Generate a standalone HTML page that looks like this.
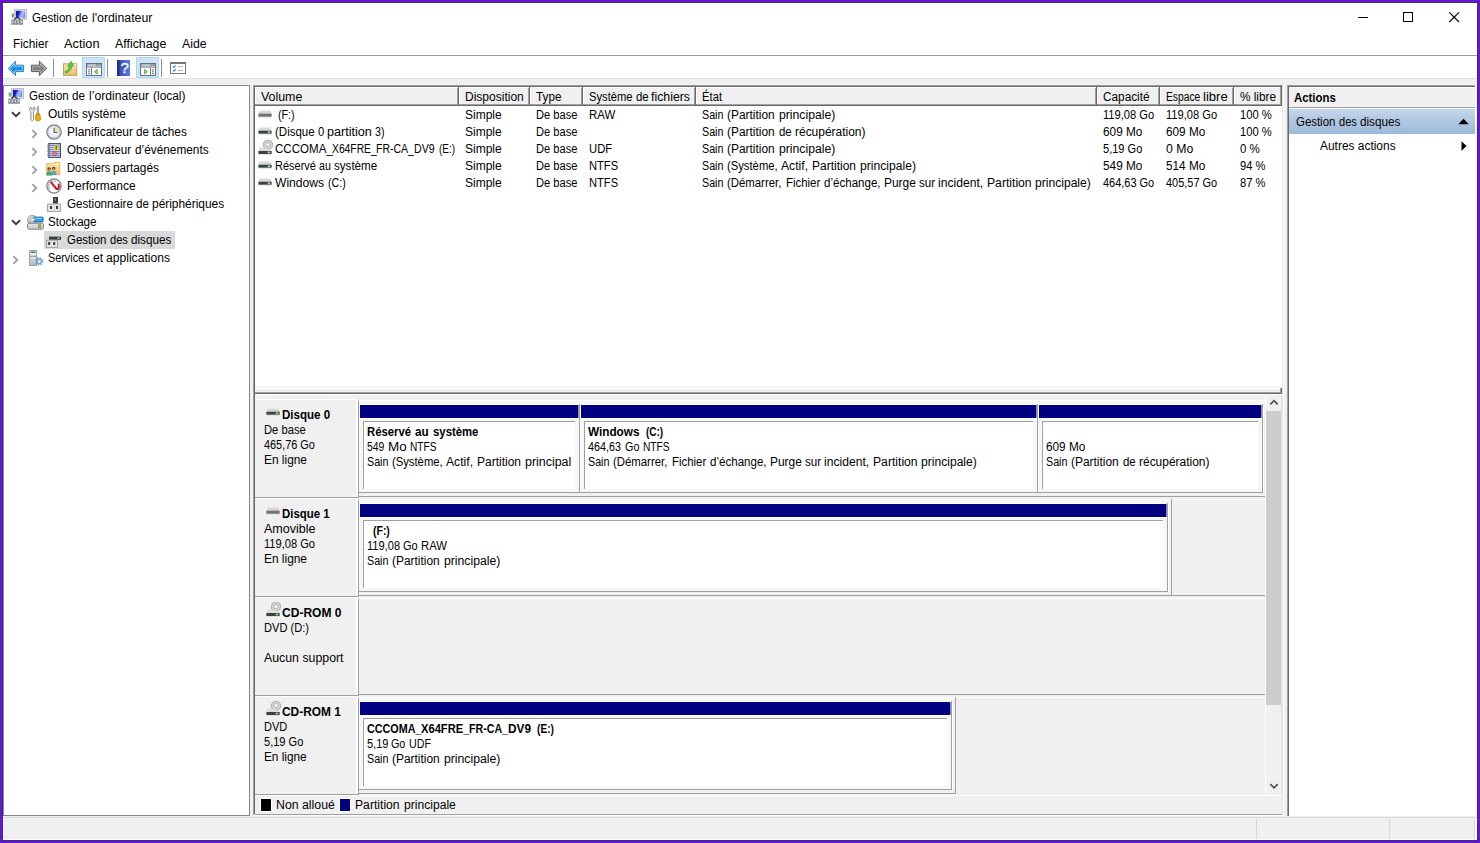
<!DOCTYPE html>
<html lang="fr"><head><meta charset="utf-8"><title>Gestion de l'ordinateur</title>
<style>
html,body{margin:0;padding:0}
body{width:1480px;height:843px;overflow:hidden;position:relative;background:#700ee0;font-family:"Liberation Sans",sans-serif;font-size:12px;color:#000}
.a,.t,svg{position:absolute}
.t{white-space:pre;line-height:14px;height:14px;transform-origin:0 0;font-size:12px}
.w{background:#fff}.g{background:#f0f0f0}.d1{background:#a0a0a0}.d2{background:#696969}.nv{background:#000080}
</style></head><body>
<!-- window frame -->
<div class="a" style="left:1px;top:1px;width:1478px;height:841px;background:#5d1dc0"></div>
<div class="a" style="left:2px;top:2px;width:1476px;height:839px;background:#382c7e"></div>
<div class="a w" style="left:3px;top:3px;width:1474px;height:837px"></div>
<!-- menu line / toolbar -->
<div class="a" style="left:3px;top:55px;width:1474px;height:1px;background:#a0a0a0"></div>
<div class="a" style="left:3px;top:78px;width:1474px;height:1px;background:#e4e4e4"></div>
<div class="a g" style="left:3px;top:79px;width:1474px;height:738px"></div>
<!-- status bar -->
<div class="a" style="left:3px;top:817px;width:1474px;height:1px;background:#d9d9d9"></div>
<div class="a g" style="left:3px;top:818px;width:1474px;height:21px"></div>
<div class="a w" style="left:3px;top:839px;width:1474px;height:1px"></div>
<div class="a" style="left:1256px;top:819px;width:1px;height:20px;background:#d7d7d7"></div>
<div class="a" style="left:1389px;top:819px;width:1px;height:20px;background:#d7d7d7"></div>
<div class="a" style="left:1474px;top:819px;width:1px;height:20px;background:#d7d7d7"></div>
<div class="a w" style="left:1475px;top:818px;width:2px;height:22px"></div>

<!-- toolbar buttons -->
<div class="a" style="left:82px;top:57px;width:23px;height:21px;background:#cce4f7;box-shadow:inset 0 0 0 1px #b5d6f2"></div>
<div class="a" style="left:136px;top:57px;width:23px;height:21px;background:#cce4f7;box-shadow:inset 0 0 0 1px #b5d6f2"></div>
<div class="a" style="left:53px;top:59px;width:1px;height:18px;background:#8d8d8d"></div>
<div class="a" style="left:107px;top:59px;width:1px;height:18px;background:#8d8d8d"></div>
<div class="a" style="left:161px;top:59px;width:1px;height:18px;background:#8d8d8d"></div>

<!-- left pane -->
<div class="a w" style="left:3px;top:85px;width:247px;height:731px;box-shadow:inset 0 0 0 1px #828790"></div>
<div class="a" style="left:44px;top:231px;width:131px;height:18px;background:#d9d9d9"></div>

<!-- middle pane: upper list -->
<div class="a d1" style="left:253px;top:85px;width:29px;height:730px;width:1px"></div>
<div class="a d2" style="left:254px;top:86px;width:1px;height:728px"></div>
<div class="a d1" style="left:253px;top:85px;width:1029px;height:1px"></div>
<div class="a d2" style="left:254px;top:86px;width:1028px;height:1px"></div>
<div class="a w" style="left:255px;top:87px;width:1027px;height:299px"></div>
<div class="a d1" style="left:1280px;top:87px;width:1px;height:19px"></div>
<div class="a d2" style="left:1281px;top:85px;width:1px;height:21px"></div>
<div class="a" style="left:1282px;top:85px;width:1px;height:731px;background:#e3e3e3"></div>
<div class="a w" style="left:1283px;top:85px;width:1px;height:731px"></div>
<!-- header -->
<div class="a g" style="left:256px;top:88px;width:1024px;height:16px"></div>
<div class="a d1" style="left:255px;top:104px;width:1025px;height:1px"></div>
<div class="a d2" style="left:255px;top:105px;width:1026px;height:1px"></div>
<div class="a w" style="left:255px;top:87px;width:1025px;height:1px"></div>
<div class="a w" style="left:255px;top:87px;width:1px;height:17px"></div>
<div class="a d1" style="left:457px;top:88px;width:1px;height:17px"></div>
<div class="a d2" style="left:458px;top:87px;width:1px;height:18px"></div>
<div class="a w" style="left:459px;top:87px;width:1px;height:17px"></div>
<div class="a d1" style="left:528px;top:88px;width:1px;height:17px"></div>
<div class="a d2" style="left:529px;top:87px;width:1px;height:18px"></div>
<div class="a w" style="left:530px;top:87px;width:1px;height:17px"></div>
<div class="a d1" style="left:581px;top:88px;width:1px;height:17px"></div>
<div class="a d2" style="left:582px;top:87px;width:1px;height:18px"></div>
<div class="a w" style="left:583px;top:87px;width:1px;height:17px"></div>
<div class="a d1" style="left:694px;top:88px;width:1px;height:17px"></div>
<div class="a d2" style="left:695px;top:87px;width:1px;height:18px"></div>
<div class="a w" style="left:696px;top:87px;width:1px;height:17px"></div>
<div class="a d1" style="left:1095px;top:88px;width:1px;height:17px"></div>
<div class="a d2" style="left:1096px;top:87px;width:1px;height:18px"></div>
<div class="a w" style="left:1097px;top:87px;width:1px;height:17px"></div>
<div class="a d1" style="left:1158px;top:88px;width:1px;height:17px"></div>
<div class="a d2" style="left:1159px;top:87px;width:1px;height:18px"></div>
<div class="a w" style="left:1160px;top:87px;width:1px;height:17px"></div>
<div class="a d1" style="left:1232px;top:88px;width:1px;height:17px"></div>
<div class="a d2" style="left:1233px;top:87px;width:1px;height:18px"></div>
<div class="a w" style="left:1234px;top:87px;width:1px;height:17px"></div>
<!-- splitter -->
<div class="a g" style="left:255px;top:386px;width:1027px;height:6px"></div>
<div class="a w" style="left:255px;top:388px;width:1025px;height:1px"></div>
<div class="a d1" style="left:255px;top:392px;width:1026px;height:1px"></div>
<div class="a d2" style="left:255px;top:393px;width:1027px;height:1px"></div>
<div class="a d1" style="left:1280px;top:388px;width:1px;height:5px"></div>
<div class="a d2" style="left:1281px;top:388px;width:1px;height:6px"></div>
<div class="a w" style="left:255px;top:394px;width:1027px;height:1px"></div>
<!-- lower graphical view -->
<div class="a w" style="left:256px;top:399px;width:100px;height:1px"></div>
<div class="a w" style="left:359px;top:400px;width:906px;height:1px"></div>
<div class="a w" style="left:356px;top:400px;width:2px;height:97px"></div>
<div class="a d1" style="left:358px;top:401px;width:1px;height:97px"></div>
<div class="a d1" style="left:255px;top:497px;width:103px;height:1px"></div>
<div class="a d1" style="left:359px;top:496px;width:906px;height:1px"></div>
<div class="a" style="left:359px;top:401px;width:905px;height:91px;background:#f6f6f6"></div>
<div class="a d1" style="left:359px;top:492px;width:904px;height:1px"></div>
<div class="a w" style="left:360px;top:404px;width:219px;height:1px"></div>
<div class="a nv" style="left:360px;top:405px;width:218px;height:13px"></div>
<div class="a w" style="left:360px;top:418px;width:219px;height:1px"></div>
<div class="a d1" style="left:579px;top:404px;width:1px;height:89px"></div>
<div class="a" style="left:578px;top:405px;width:1px;height:13px;background:#8c8cc4"></div>
<div class="a w" style="left:580px;top:404px;width:1px;height:88px"></div>
<div class="a w" style="left:363px;top:421px;width:212px;height:68px;box-shadow:inset 1px 1px 0 #a0a0a0"></div>
<div class="a w" style="left:581px;top:404px;width:456px;height:1px"></div>
<div class="a nv" style="left:581px;top:405px;width:455px;height:13px"></div>
<div class="a w" style="left:581px;top:418px;width:456px;height:1px"></div>
<div class="a d1" style="left:1037px;top:404px;width:1px;height:89px"></div>
<div class="a" style="left:1036px;top:405px;width:1px;height:13px;background:#8c8cc4"></div>
<div class="a w" style="left:1038px;top:404px;width:1px;height:88px"></div>
<div class="a w" style="left:584px;top:421px;width:449px;height:68px;box-shadow:inset 1px 1px 0 #a0a0a0"></div>
<div class="a w" style="left:1039px;top:404px;width:223px;height:1px"></div>
<div class="a nv" style="left:1039px;top:405px;width:222px;height:13px"></div>
<div class="a w" style="left:1039px;top:418px;width:223px;height:1px"></div>
<div class="a d1" style="left:1262px;top:404px;width:1px;height:89px"></div>
<div class="a" style="left:1261px;top:405px;width:1px;height:13px;background:#8c8cc4"></div>
<div class="a w" style="left:1263px;top:404px;width:1px;height:88px"></div>
<div class="a w" style="left:1042px;top:421px;width:216px;height:68px;box-shadow:inset 1px 1px 0 #a0a0a0"></div>
<div class="a w" style="left:256px;top:498px;width:100px;height:1px"></div>
<div class="a w" style="left:359px;top:499px;width:906px;height:1px"></div>
<div class="a w" style="left:356px;top:499px;width:2px;height:97px"></div>
<div class="a d1" style="left:358px;top:500px;width:1px;height:97px"></div>
<div class="a d1" style="left:255px;top:596px;width:103px;height:1px"></div>
<div class="a d1" style="left:359px;top:595px;width:906px;height:1px"></div>
<div class="a" style="left:359px;top:500px;width:810px;height:91px;background:#f6f6f6"></div>
<div class="a d1" style="left:359px;top:591px;width:809px;height:1px"></div>
<div class="a d1" style="left:1171px;top:499px;width:1px;height:97px"></div>
<div class="a w" style="left:360px;top:503px;width:807px;height:1px"></div>
<div class="a nv" style="left:360px;top:504px;width:806px;height:13px"></div>
<div class="a w" style="left:360px;top:517px;width:807px;height:1px"></div>
<div class="a d1" style="left:1167px;top:503px;width:1px;height:89px"></div>
<div class="a" style="left:1166px;top:504px;width:1px;height:13px;background:#8c8cc4"></div>
<div class="a w" style="left:1168px;top:503px;width:1px;height:88px"></div>
<div class="a w" style="left:363px;top:520px;width:800px;height:68px;box-shadow:inset 1px 1px 0 #a0a0a0"></div>
<div class="a w" style="left:256px;top:597px;width:100px;height:1px"></div>
<div class="a w" style="left:359px;top:598px;width:906px;height:1px"></div>
<div class="a w" style="left:356px;top:598px;width:2px;height:97px"></div>
<div class="a d1" style="left:358px;top:599px;width:1px;height:97px"></div>
<div class="a d1" style="left:255px;top:695px;width:103px;height:1px"></div>
<div class="a d1" style="left:359px;top:694px;width:906px;height:1px"></div>
<div class="a w" style="left:256px;top:696px;width:100px;height:1px"></div>
<div class="a w" style="left:359px;top:697px;width:906px;height:1px"></div>
<div class="a w" style="left:356px;top:697px;width:2px;height:97px"></div>
<div class="a d1" style="left:358px;top:698px;width:1px;height:97px"></div>
<div class="a d1" style="left:255px;top:794px;width:103px;height:1px"></div>
<div class="a d1" style="left:359px;top:793px;width:597px;height:1px"></div>
<div class="a" style="left:359px;top:698px;width:594px;height:91px;background:#f6f6f6"></div>
<div class="a d1" style="left:359px;top:789px;width:593px;height:1px"></div>
<div class="a d1" style="left:955px;top:697px;width:1px;height:97px"></div>
<div class="a w" style="left:360px;top:701px;width:591px;height:1px"></div>
<div class="a nv" style="left:360px;top:702px;width:590px;height:13px"></div>
<div class="a w" style="left:360px;top:715px;width:591px;height:1px"></div>
<div class="a d1" style="left:951px;top:701px;width:1px;height:89px"></div>
<div class="a" style="left:950px;top:702px;width:1px;height:13px;background:#8c8cc4"></div>
<div class="a w" style="left:952px;top:701px;width:1px;height:88px"></div>
<div class="a w" style="left:363px;top:718px;width:584px;height:68px;box-shadow:inset 1px 1px 0 #a0a0a0"></div>
<!-- scrollbar -->
<div class="a w" style="left:1265px;top:395px;width:1px;height:399px"></div>
<div class="a g" style="left:1266px;top:395px;width:16px;height:399px"></div>
<div class="a" style="left:1281px;top:395px;width:1px;height:420px;background:#e3e3e3"></div>
<div class="a" style="left:1266px;top:411px;width:15px;height:294px;background:#cdcdcd"></div>
<svg style="left:1269px;top:398px" width="10" height="8" viewBox="0 0 10 8"><path d="M1.3 6.4 L5 2.7 L8.7 6.4" fill="none" stroke="#505050" stroke-width="1.7"/></svg>
<svg style="left:1269px;top:782px" width="10" height="8" viewBox="0 0 10 8"><path d="M1.3 2.2 L5 5.9 L8.7 2.2" fill="none" stroke="#505050" stroke-width="1.7"/></svg>
<!-- legend -->
<div class="a g" style="left:255px;top:795px;width:1027px;height:19px"></div>
<div class="a w" style="left:255px;top:795px;width:1027px;height:1px"></div>
<div class="a d1" style="left:255px;top:814px;width:1027px;height:1px"></div>
<div class="a w" style="left:253px;top:815px;width:1031px;height:1px"></div>
<div class="a" style="left:261px;top:799px;width:10px;height:12px;background:#000;box-shadow:0 0 0 1px #fff"></div>
<div class="a nv" style="left:340px;top:799px;width:10px;height:12px;box-shadow:0 0 0 1px #fff"></div>

<!-- actions pane -->
<div class="a w" style="left:1287px;top:85px;width:1189px;height:731px;width:189px"></div>
<div class="a d1" style="left:1287px;top:85px;width:1px;height:731px"></div>
<div class="a d2" style="left:1288px;top:86px;width:1px;height:730px"></div>
<div class="a d1" style="left:1287px;top:85px;width:188px;height:1px"></div>
<div class="a d2" style="left:1288px;top:86px;width:187px;height:1px"></div>
<div class="a g" style="left:1289px;top:88px;width:186px;height:19px"></div>
<div class="a d1" style="left:1289px;top:107px;width:186px;height:1px"></div>
<div class="a" style="left:1289px;top:109px;width:186px;height:25px;background:linear-gradient(#c4d6ea,#9cb8d9)"></div>
<svg style="left:1458px;top:118px" width="11" height="7" viewBox="0 0 11 7"><path d="M0.3 6.3 L5.5 0.8 L10.7 6.3 Z" fill="#000"/></svg>
<svg style="left:1461px;top:141px" width="6" height="10" viewBox="0 0 6 10"><path d="M0.5 0.3 L5.6 5 L0.5 9.7 Z" fill="#000"/></svg>

<!-- window controls -->
<svg style="left:1350px;top:8px" width="120" height="20" viewBox="0 0 120 20" shape-rendering="crispEdges">
<rect x="8" y="9" width="10" height="1" fill="#000"/>
<rect x="53.5" y="4.5" width="9" height="9" fill="none" stroke="#000" stroke-width="1"/>
<path d="M99.3 4.3 L109 14 M109 4.3 L99.3 14" stroke="#000" stroke-width="1.1" fill="none" shape-rendering="geometricPrecision"/>
</svg>
<svg width="0" height="0" style="left:0;top:0"><defs>
<linearGradient id="gB" x1="0" y1="0" x2="0" y2="1"><stop offset="0" stop-color="#4cb2f0"/><stop offset="0.6" stop-color="#1488dc"/><stop offset="1" stop-color="#0a74c8"/></linearGradient>
<linearGradient id="gG" x1="0" y1="0" x2="0" y2="1"><stop offset="0" stop-color="#8e8e8e"/><stop offset="1" stop-color="#787878"/></linearGradient>
<linearGradient id="gF" x1="0" y1="0" x2="0" y2="1"><stop offset="0" stop-color="#fae7a8"/><stop offset="1" stop-color="#f2be62"/></linearGradient>
<linearGradient id="gS" x1="0" y1="0.2" x2="1" y2="0.5"><stop offset="0" stop-color="#1212b4"/><stop offset="0.36" stop-color="#1a22c0"/><stop offset="0.5" stop-color="#8090f0"/><stop offset="0.8" stop-color="#b4bef8"/><stop offset="1" stop-color="#6c7ce4"/></linearGradient>
<linearGradient id="gH" x1="0" y1="0" x2="1" y2="0"><stop offset="0" stop-color="#22358f"/><stop offset="0.2" stop-color="#3a52b8"/><stop offset="1" stop-color="#5b7bd9"/></linearGradient>
<linearGradient id="gD" x1="0" y1="0" x2="0" y2="1"><stop offset="0" stop-color="#e6e6e6"/><stop offset="1" stop-color="#c9c9c9"/></linearGradient>
<radialGradient id="gC" cx="0.5" cy="0.5" r="0.5"><stop offset="0" stop-color="#ffffff"/><stop offset="0.7" stop-color="#e8eefb"/><stop offset="1" stop-color="#cfd8ea"/></radialGradient>
<linearGradient id="gCD" x1="0" y1="0" x2="1" y2="1"><stop offset="0" stop-color="#f0f0f0"/><stop offset="0.5" stop-color="#b8b8b8"/><stop offset="1" stop-color="#e0e0e0"/></linearGradient>
<linearGradient id="gT" x1="0" y1="0" x2="0" y2="1"><stop offset="0" stop-color="#eef2f4"/><stop offset="1" stop-color="#aebac0"/></linearGradient>
</defs></svg>
<svg style="left:11px;top:9px" width="16" height="16" viewBox="0 0 16 16" ><rect x="3.4" y="0.4" width="12.2" height="10" fill="#d6daf2" stroke="#b6beba" stroke-width="0.9"/>
<rect x="4.9" y="1.9" width="9.1" height="6.9" fill="url(#gS)"/>
<rect x="0.6" y="4.4" width="2.4" height="4.4" fill="#a4bf94"/><rect x="1.4" y="5.2" width="0.9" height="2.2" fill="#4c6444"/>
<path d="M3.2 10.9q3-4.4 6.2 0" fill="none" stroke="#2c3038" stroke-width="1.5"/><rect x="5.3" y="9.6" width="2" height="1.2" fill="#fff"/>
<rect x="0.2" y="10.7" width="11.8" height="5.1" fill="#8c9498"/><rect x="0.2" y="10.7" width="11.8" height="0.9" fill="#a8b0b2"/>
<rect x="0.8" y="12.3" width="10.6" height="1.5" fill="#e6eaec"/>
<rect x="2.4" y="12.1" width="1.1" height="1.9" fill="#5c6468"/><rect x="5.3" y="12.1" width="1.1" height="1.9" fill="#5c6468"/><rect x="8.2" y="12.1" width="1.1" height="1.9" fill="#5c6468"/></svg>
<svg style="left:8px;top:88px" width="16" height="16" viewBox="0 0 16 16" ><rect x="3.4" y="0.4" width="12.2" height="10" fill="#d6daf2" stroke="#b6beba" stroke-width="0.9"/>
<rect x="4.9" y="1.9" width="9.1" height="6.9" fill="url(#gS)"/>
<rect x="0.6" y="4.4" width="2.4" height="4.4" fill="#a4bf94"/><rect x="1.4" y="5.2" width="0.9" height="2.2" fill="#4c6444"/>
<path d="M3.2 10.9q3-4.4 6.2 0" fill="none" stroke="#2c3038" stroke-width="1.5"/><rect x="5.3" y="9.6" width="2" height="1.2" fill="#fff"/>
<rect x="0.2" y="10.7" width="11.8" height="5.1" fill="#8c9498"/><rect x="0.2" y="10.7" width="11.8" height="0.9" fill="#a8b0b2"/>
<rect x="0.8" y="12.3" width="10.6" height="1.5" fill="#e6eaec"/>
<rect x="2.4" y="12.1" width="1.1" height="1.9" fill="#5c6468"/><rect x="5.3" y="12.1" width="1.1" height="1.9" fill="#5c6468"/><rect x="8.2" y="12.1" width="1.1" height="1.9" fill="#5c6468"/></svg>
<svg style="left:7px;top:60px" width="18" height="17" viewBox="0 0 18 17" ><path d="M1.2 8.4 L8.6 1.2 L8.6 5.2 L16.6 5.2 L16.6 11.6 L8.6 11.6 L8.6 15.6 Z" fill="#8ed2f8" stroke="#2f7fc4" stroke-width="1" stroke-linejoin="round"/><path d="M3.1 8.4 L7.4 4.2 L7.4 6.5 L15.3 6.5 L15.3 10.3 L7.4 10.3 L7.4 12.6 Z" fill="url(#gB)"/></svg>
<svg style="left:30px;top:60px" width="18" height="17" viewBox="0 0 18 17" ><path d="M16.8 8.4 L9.4 1.2 L9.4 5.2 L1.4 5.2 L1.4 11.6 L9.4 11.6 L9.4 15.6 Z" fill="#b4b4b4" stroke="#5a5a5a" stroke-width="1" stroke-linejoin="round"/><path d="M14.9 8.4 L10.6 4.2 L10.6 6.5 L2.7 6.5 L2.7 10.3 L10.6 10.3 L10.6 12.6 Z" fill="url(#gG)"/></svg>
<svg style="left:62px;top:59px" width="16" height="18" viewBox="0 0 16 18" ><rect x="1.5" y="4.8" width="13.2" height="11.5" fill="url(#gF)" stroke="#bca06a" stroke-width="1"/>
<path d="M10.4 5.4h3.8v1.9h-4.6z" fill="#fdf4cf"/><path d="M2 7.4h12.2" stroke="#e9cf8c" stroke-width="0.8"/>
<path d="M3.1 12.6C5.8 11.9 7.3 9.6 7.6 6.6L5.7 7.2 9 2.3 11.7 7 9.9 6.6C9.7 10.4 7.4 13.2 3.8 13.9z" fill="#52d252" stroke="#2f9c32" stroke-width="0.7" stroke-linejoin="round"/></svg>
<svg style="left:86px;top:63px" width="16" height="13" viewBox="0 0 16 13" ><rect x="0.5" y="0.5" width="15" height="12" fill="#fff" stroke="#6b7380"/>
<rect x="1" y="1" width="14" height="4" fill="#6f7783"/><rect x="1.5" y="1.5" width="9" height="1.1" fill="#ffffff"/><rect x="11.6" y="1.5" width="1.1" height="1.1" fill="#ffffff"/><rect x="13.5" y="1.5" width="1.1" height="1.1" fill="#ffffff"/><rect x="1" y="3.5" width="14" height="1" fill="#eef0f4"/>
<rect x="5" y="5" width="1" height="7.5" fill="#6b7380"/>
<rect x="2" y="6.4" width="2" height="1" fill="#6b7380"/><rect x="2" y="8.3" width="2" height="1" fill="#6b7380"/><rect x="2" y="10.2" width="2" height="1" fill="#6b7380"/>
<path d="M11.2 6.6v4.2l-2.8-2.1z" fill="#a8e29a" stroke="#46a83a" stroke-width="0.9"/></svg>
<svg style="left:117px;top:60px" width="13" height="16" viewBox="0 0 13 16" ><rect x="0" y="0" width="13" height="16" fill="url(#gH)"/><rect x="0" y="0" width="2.4" height="16" fill="#1f2f86"/>
<text x="7.7" y="13.4" font-family="Liberation Sans, sans-serif" font-weight="400" font-size="15" fill="#fff" stroke="#fff" stroke-width="0.3" text-anchor="middle">?</text></svg>
<svg style="left:140px;top:63px" width="16" height="13" viewBox="0 0 16 13" ><rect x="0.5" y="0.5" width="15" height="12" fill="#fff" stroke="#6b7380"/>
<rect x="1" y="1" width="14" height="4" fill="#6f7783"/><rect x="1.5" y="1.5" width="9" height="1.1" fill="#ffffff"/><rect x="11.6" y="1.5" width="1.1" height="1.1" fill="#ffffff"/><rect x="13.5" y="1.5" width="1.1" height="1.1" fill="#ffffff"/><rect x="1" y="3.5" width="14" height="1" fill="#eef0f4"/>
<rect x="10" y="5" width="1" height="7.5" fill="#6b7380"/>
<rect x="12" y="6.4" width="2" height="1" fill="#6b7380"/><rect x="12" y="8.3" width="2" height="1" fill="#6b7380"/><rect x="12" y="10.2" width="2" height="1" fill="#6b7380"/>
<path d="M4.6 6.6v4.2l2.8-2.1z" fill="#a8e29a" stroke="#46a83a" stroke-width="0.9"/></svg>
<svg style="left:170px;top:62px" width="16" height="12" viewBox="0 0 16 12" ><rect x="0.5" y="0.5" width="15" height="11" fill="#fff" stroke="#787878"/><rect x="0" y="0" width="16" height="2" fill="#787878"/>
<path d="M3 4.2l1.1 1.4 1.7-2.4" fill="none" stroke="#3f86d8" stroke-width="1.1"/><path d="M3 8l1.1 1.4 1.7-2.4" fill="none" stroke="#3f86d8" stroke-width="1.1"/>
<rect x="8" y="4.2" width="5" height="1" fill="#b4b4b4"/><rect x="8" y="8" width="5" height="1" fill="#b4b4b4"/></svg>
<svg style="left:11px;top:111px" width="10" height="7" viewBox="0 0 10 7" ><path d="M1 1.3 L5 5.2 L9 1.3" fill="none" stroke="#3c3c3c" stroke-width="1.9"/></svg>
<svg style="left:11px;top:219px" width="10" height="7" viewBox="0 0 10 7" ><path d="M1 1.3 L5 5.2 L9 1.3" fill="none" stroke="#3c3c3c" stroke-width="1.9"/></svg>
<svg style="left:31px;top:128.5px" width="7" height="10" viewBox="0 0 7 10" ><path d="M1.4 1.2 L5.2 5 L1.4 8.8" fill="none" stroke="#a2a2a2" stroke-width="1.9"/></svg>
<svg style="left:31px;top:146.5px" width="7" height="10" viewBox="0 0 7 10" ><path d="M1.4 1.2 L5.2 5 L1.4 8.8" fill="none" stroke="#a2a2a2" stroke-width="1.9"/></svg>
<svg style="left:31px;top:164.5px" width="7" height="10" viewBox="0 0 7 10" ><path d="M1.4 1.2 L5.2 5 L1.4 8.8" fill="none" stroke="#a2a2a2" stroke-width="1.9"/></svg>
<svg style="left:31px;top:182.5px" width="7" height="10" viewBox="0 0 7 10" ><path d="M1.4 1.2 L5.2 5 L1.4 8.8" fill="none" stroke="#a2a2a2" stroke-width="1.9"/></svg>
<svg style="left:12px;top:254.5px" width="7" height="10" viewBox="0 0 7 10" ><path d="M1.4 1.2 L5.2 5 L1.4 8.8" fill="none" stroke="#a2a2a2" stroke-width="1.9"/></svg>
<svg style="left:29px;top:106px" width="12" height="16" viewBox="0 0 12 16" ><path d="M2 0.9 C0 1.8 -0.2 4.6 1.9 5.6 L1.9 13.6 Q3.2 15.8 4.5 13.6 L4.5 5.6 C6.6 4.6 6.6 2 5 0.8 L4.4 3.2 L2.6 3.4 Z" fill="#f4f4f4" stroke="#8c8c8c" stroke-width="1"/>
<rect x="8.4" y="0.2" width="1.1" height="7.4" fill="#5a5a5a"/>
<path d="M7.4 7.2h3v1.6l1 1.2v4q-2.5 2.2-5 0v-4l1-1.2z" fill="#ecae00" stroke="#c48a00" stroke-width="0.7"/><rect x="7.2" y="8.6" width="3.4" height="0.8" fill="#a87400"/></svg>
<svg style="left:46px;top:124px" width="16" height="16" viewBox="0 0 16 16" ><circle cx="8" cy="8" r="7.1" fill="url(#gC)" stroke="#8a8a8a" stroke-width="1.5"/><circle cx="8" cy="8" r="5.9" fill="none" stroke="#c4ccdc" stroke-width="0.9"/>
<path d="M8 8V2.6A5.4 5.4 0 0 1 13.4 8z" fill="#ece0a4"/>
<path d="M8 4V8.5H11.4" fill="none" stroke="#565e66" stroke-width="1.1"/></svg>
<svg style="left:47px;top:143px" width="14" height="15" viewBox="0 0 14 15" ><rect x="1.9" y="0.5" width="11.6" height="14" fill="#c8d8fa" stroke="#4c5474" stroke-width="1.3"/><rect x="3" y="2.2" width="9.6" height="0.8" fill="#6676ac"/><rect x="3" y="4.2" width="9.6" height="0.8" fill="#6676ac"/><rect x="3" y="6.2" width="9.6" height="0.8" fill="#6676ac"/><rect x="3" y="8.2" width="9.6" height="0.8" fill="#6676ac"/><rect x="3" y="10.2" width="9.6" height="0.8" fill="#6676ac"/><rect x="3" y="12.2" width="9.6" height="0.8" fill="#6676ac"/><rect x="0.2" y="1.5" width="2.6" height="1.2" rx="0.5" fill="#7c808a"/><rect x="0.2" y="3.6" width="2.6" height="1.2" rx="0.5" fill="#7c808a"/><rect x="0.2" y="5.7" width="2.6" height="1.2" rx="0.5" fill="#7c808a"/><rect x="0.2" y="7.8" width="2.6" height="1.2" rx="0.5" fill="#7c808a"/><rect x="0.2" y="9.9" width="2.6" height="1.2" rx="0.5" fill="#7c808a"/><rect x="0.2" y="12.0" width="2.6" height="1.2" rx="0.5" fill="#7c808a"/>
<circle cx="9.2" cy="4.8" r="2.6" fill="#ecd22c"/><rect x="8.75" y="3" width="1" height="2.5" fill="#3a3200"/><rect x="8.75" y="5.9" width="1" height="0.9" fill="#3a3200"/>
<circle cx="7.5" cy="10.6" r="2.4" fill="#d63e4a"/><path d="M6.5 9.6l2 2M8.5 9.6l-2 2" stroke="#fff" stroke-width="0.9"/></svg>
<svg style="left:46px;top:161px" width="15" height="15" viewBox="0 0 15 15" ><path d="M0.6 2.6h6.2l1.2-1.3h5q0.8 0 0.8 0.8v11.7h-13.2z" fill="url(#gF)" stroke="#d6b46c" stroke-width="0.9"/>
<path d="M7.2 3.4h6.2" stroke="#fff6d0" stroke-width="0.8"/>
<path d="M0.4 14.6q0.2-4.4 2.8-4.4t2.8 4.4z" fill="#3aa870"/><circle cx="3.2" cy="7.9" r="1.7" fill="#54422f"/><circle cx="3.3" cy="8.5" r="0.9" fill="#c89a78"/>
<path d="M5 14q0.2-4.2 2.7-4.2t2.7 4.2z" fill="#5a9ad0"/><circle cx="7.7" cy="7.4" r="1.7" fill="#54422f"/><circle cx="7.8" cy="8" r="0.9" fill="#c89a78"/></svg>
<svg style="left:46px;top:178px" width="16" height="16" viewBox="0 0 16 16" ><circle cx="8" cy="8" r="7.1" fill="#fdfdfd" stroke="#8c8c8c" stroke-width="1.5"/>
<path d="M4 11A4.8 4.8 0 0 1 9.6 3.4" fill="none" stroke="#3c5c48" stroke-width="1" stroke-dasharray="1 1"/>
<path d="M12.3 5.6A4.8 4.8 0 0 1 12 11L9.8 11" fill="none" stroke="#b8182c" stroke-width="1.8"/>
<path d="M4.6 3.8L10.6 11" stroke="#cc1c30" stroke-width="2.1"/></svg>
<svg style="left:47px;top:197px" width="14" height="15" viewBox="0 0 14 15" ><rect x="6" y="0" width="5" height="6.6" fill="#3a3a3a"/><rect x="7.6" y="1.6" width="1.4" height="2" fill="#9c9c9c"/>
<rect x="0.6" y="7" width="12.8" height="7.4" fill="#e4e4e4" stroke="#9a9a9a" stroke-width="0.9"/>
<rect x="3" y="9" width="2" height="3" fill="#3a3a3a"/><rect x="9" y="9" width="2" height="3" fill="#3a3a3a"/></svg>
<svg style="left:27px;top:215px" width="17" height="15" viewBox="0 0 17 15" ><circle cx="5.2" cy="5" r="4.7" fill="url(#gCD)" stroke="#8e8e8e" stroke-width="0.8"/><circle cx="5.2" cy="5" r="1.5" fill="#fafafa" stroke="#9c9c9c" stroke-width="0.5"/>
<rect x="7" y="2" width="9.2" height="5" rx="1" fill="#2b9ad8" stroke="#1b6aa8" stroke-width="0.8"/><rect x="8.2" y="2.8" width="7" height="1.5" rx="0.6" fill="#7ecbf2"/><rect x="6.4" y="3.6" width="1.6" height="1.6" fill="#e8f4fc"/>
<rect x="0.6" y="8.2" width="15.8" height="6" rx="1.6" fill="url(#gD)" stroke="#7e7e7e" stroke-width="1"/><rect x="11.4" y="9.7" width="2.3" height="3.1" fill="#8ccc3c" stroke="#5a8a2a" stroke-width="0.5"/></svg>
<svg style="left:46px;top:236px" width="15" height="12" viewBox="0 0 15 12" ><rect x="3" y="0.6" width="12" height="3.2" fill="#3a403c"/><rect x="11.6" y="1.4" width="2" height="1.5" fill="#7fe070"/>
<rect x="0.5" y="4.2" width="11" height="7.2" fill="#e6e6e6" stroke="#9a9a9a" stroke-width="0.9"/>
<rect x="2.2" y="6" width="2" height="3" fill="#3a3a3a"/><rect x="7.2" y="6" width="2" height="3" fill="#3a3a3a"/></svg>
<svg style="left:29px;top:250px" width="15" height="16" viewBox="0 0 15 16" ><rect x="0.6" y="0.6" width="7" height="14.8" fill="url(#gT)" stroke="#8a969c" stroke-width="0.9"/>
<rect x="1.8" y="1.6" width="4.6" height="1.2" fill="#3c4448"/><rect x="1.3" y="3.8" width="5.6" height="1" fill="#fdfdfd"/><rect x="1.3" y="5.8" width="5.6" height="0.9" fill="#76828a"/><rect x="1.3" y="7.4" width="5.6" height="0.9" fill="#f0f4f6"/>
<circle cx="10.2" cy="11.4" r="3.4" fill="none" stroke="#6f9ed2" stroke-width="1.6" stroke-dasharray="1.33 1.34"/><circle cx="10.2" cy="11.4" r="2.6" fill="#9cbfe6" stroke="#5f8ec6" stroke-width="0.8"/><circle cx="10.2" cy="11.4" r="1.2" fill="#fff"/></svg>
<svg style="left:258px;top:110px" width="14" height="8" viewBox="0 0 14 8" ><path d="M1.6 0.3h10.8l1.3 3.6H0.3z" fill="url(#gD)"/><rect x="0.4" y="3.8" width="13.2" height="3" fill="#6f6f6f"/><rect x="0.4" y="6.8" width="13.2" height="0.7" fill="#d0d0d0"/></svg>
<svg style="left:258px;top:127px" width="14" height="8" viewBox="0 0 14 8" ><path d="M1.6 0.3h10.8l1.3 3.6H0.3z" fill="url(#gD)"/><rect x="0.4" y="3.8" width="13.2" height="3" fill="#3c423e"/><rect x="0.4" y="6.8" width="13.2" height="0.7" fill="#d0d0d0"/><rect x="9.6" y="4.6" width="2.6" height="1.4" fill="#5fd65a"/><rect x="10.6" y="4.4" width="1" height="1.8" fill="#b8f5b0"/></svg>
<svg style="left:258px;top:140px" width="15" height="15" viewBox="0 0 15 15" ><circle cx="10" cy="4.7" r="4.7" fill="#d2d6d2" stroke="#a4a4a4" stroke-width="0.9"/><circle cx="10" cy="4.7" r="2.2" fill="#e4e4e4" stroke="#a8a8a8" stroke-width="0.7"/><circle cx="10" cy="4.7" r="1.1" fill="#fff"/>
<path d="M1.2 7.6h6.5q1.6 2 4.8 1.2l1.2 2.2H0.3z" fill="#dcdcdc"/><rect x="0.4" y="11" width="13.2" height="3" fill="#3c423e"/><rect x="9.6" y="11.8" width="2.6" height="1.4" fill="#5fd65a"/><rect x="10.6" y="11.6" width="1" height="1.8" fill="#b8f5b0"/><rect x="0.4" y="14" width="13.2" height="0.6" fill="#d0d0d0"/></svg>
<svg style="left:258px;top:161px" width="14" height="8" viewBox="0 0 14 8" ><path d="M1.6 0.3h10.8l1.3 3.6H0.3z" fill="url(#gD)"/><rect x="0.4" y="3.8" width="13.2" height="3" fill="#3c423e"/><rect x="0.4" y="6.8" width="13.2" height="0.7" fill="#d0d0d0"/><rect x="9.6" y="4.6" width="2.6" height="1.4" fill="#5fd65a"/><rect x="10.6" y="4.4" width="1" height="1.8" fill="#b8f5b0"/></svg>
<svg style="left:258px;top:178px" width="14" height="8" viewBox="0 0 14 8" ><path d="M1.6 0.3h10.8l1.3 3.6H0.3z" fill="url(#gD)"/><rect x="0.4" y="3.8" width="13.2" height="3" fill="#3c423e"/><rect x="0.4" y="6.8" width="13.2" height="0.7" fill="#d0d0d0"/><rect x="9.6" y="4.6" width="2.6" height="1.4" fill="#5fd65a"/><rect x="10.6" y="4.4" width="1" height="1.8" fill="#b8f5b0"/></svg>
<svg style="left:266px;top:408px" width="14" height="8" viewBox="0 0 14 8" ><path d="M1.6 0.3h10.8l1.3 3.6H0.3z" fill="url(#gD)"/><rect x="0.4" y="3.8" width="13.2" height="3" fill="#3c423e"/><rect x="0.4" y="6.8" width="13.2" height="0.7" fill="#d0d0d0"/><rect x="9.6" y="4.6" width="2.6" height="1.4" fill="#5fd65a"/><rect x="10.6" y="4.4" width="1" height="1.8" fill="#b8f5b0"/></svg>
<svg style="left:266px;top:507px" width="14" height="8" viewBox="0 0 14 8" ><path d="M1.6 0.3h10.8l1.3 3.6H0.3z" fill="url(#gD)"/><rect x="0.4" y="3.8" width="13.2" height="3" fill="#6f6f6f"/><rect x="0.4" y="6.8" width="13.2" height="0.7" fill="#d0d0d0"/></svg>
<svg style="left:266px;top:602px" width="15" height="15" viewBox="0 0 15 15" ><circle cx="10" cy="4.7" r="4.7" fill="#d2d6d2" stroke="#a4a4a4" stroke-width="0.9"/><circle cx="10" cy="4.7" r="2.2" fill="#e4e4e4" stroke="#a8a8a8" stroke-width="0.7"/><circle cx="10" cy="4.7" r="1.1" fill="#fff"/>
<path d="M1.2 7.6h6.5q1.6 2 4.8 1.2l1.2 2.2H0.3z" fill="#dcdcdc"/><rect x="0.4" y="11" width="13.2" height="3" fill="#3c423e"/><rect x="9.6" y="11.8" width="2.6" height="1.4" fill="#5fd65a"/><rect x="10.6" y="11.6" width="1" height="1.8" fill="#b8f5b0"/><rect x="0.4" y="14" width="13.2" height="0.6" fill="#d0d0d0"/></svg>
<svg style="left:266px;top:701px" width="15" height="15" viewBox="0 0 15 15" ><circle cx="10" cy="4.7" r="4.7" fill="#d2d6d2" stroke="#a4a4a4" stroke-width="0.9"/><circle cx="10" cy="4.7" r="2.2" fill="#e4e4e4" stroke="#a8a8a8" stroke-width="0.7"/><circle cx="10" cy="4.7" r="1.1" fill="#fff"/>
<path d="M1.2 7.6h6.5q1.6 2 4.8 1.2l1.2 2.2H0.3z" fill="#dcdcdc"/><rect x="0.4" y="11" width="13.2" height="3" fill="#3c423e"/><rect x="9.6" y="11.8" width="2.6" height="1.4" fill="#5fd65a"/><rect x="10.6" y="11.6" width="1" height="1.8" fill="#b8f5b0"/><rect x="0.4" y="14" width="13.2" height="0.6" fill="#d0d0d0"/></svg>
<span class="t" style="left:32.12px;top:11.0px;transform:scaleX(0.9613)">Gestion </span>
<span class="t" style="left:75.42px;top:11.0px;transform:scaleX(0.9714)">de </span>
<span class="t" style="left:91.99px;top:11.0px;transform:scaleX(1.0226)">l'ordinateur</span>
<span class="t" style="left:13.11px;top:37.0px;transform:scaleX(0.9826)">Fichier</span>
<span class="t" style="left:63.56px;top:37.0px;transform:scaleX(1.0637)">Action</span>
<span class="t" style="left:115.08px;top:37.0px;transform:scaleX(1.0305)">Affichage</span>
<span class="t" style="left:181.88px;top:37.0px;transform:scaleX(1.0255)">Aide</span>
<span class="t" style="left:29.02px;top:89.0px;transform:scaleX(0.9613)">Gestion </span>
<span class="t" style="left:72.32px;top:89.0px;transform:scaleX(0.9714)">de </span>
<span class="t" style="left:88.89px;top:89.0px;transform:scaleX(1.0126)">l’ordinateur </span>
<span class="t" style="left:152.50px;top:89.0px;transform:scaleX(0.9945)">(local)</span>
<span class="t" style="left:48.00px;top:107.0px;transform:scaleX(0.9975)">Outils </span>
<span class="t" style="left:81.91px;top:107.0px;transform:scaleX(0.9775)">système</span>
<span class="t" style="left:67.00px;top:125.0px;transform:scaleX(0.9995)">Planificateur </span>
<span class="t" style="left:136.42px;top:125.0px;transform:scaleX(0.9631)">de </span>
<span class="t" style="left:151.71px;top:125.0px;transform:scaleX(0.9837)">tâches</span>
<span class="t" style="left:67.02px;top:143.0px;transform:scaleX(0.9718)">Observateur </span>
<span class="t" style="left:134.71px;top:143.0px;transform:scaleX(0.9849)">d’événements</span>
<span class="t" style="left:67.04px;top:161.0px;transform:scaleX(0.9258)">Dossiers </span>
<span class="t" style="left:112.71px;top:161.0px;transform:scaleX(0.9824)">partagés</span>
<span class="t" style="left:67.00px;top:179.0px;transform:scaleX(1.0001)">Performance</span>
<span class="t" style="left:67.02px;top:197.0px;transform:scaleX(0.9695)">Gestionnaire </span>
<span class="t" style="left:136.42px;top:197.0px;transform:scaleX(0.9631)">de </span>
<span class="t" style="left:152.10px;top:197.0px;transform:scaleX(0.9928)">périphériques</span>
<span class="t" style="left:48.02px;top:215.0px;transform:scaleX(0.9707)">Stockage</span>
<span class="t" style="left:67.03px;top:233.0px;transform:scaleX(0.9513)">Gestion </span>
<span class="t" style="left:110.15px;top:233.0px;transform:scaleX(0.9202)">des </span>
<span class="t" style="left:131.12px;top:233.0px;transform:scaleX(0.9736)">disques</span>
<span class="t" style="left:48.06px;top:251.0px;transform:scaleX(0.9015)">Services </span>
<span class="t" style="left:92.99px;top:251.0px;transform:scaleX(1.0105)">et </span>
<span class="t" style="left:106.19px;top:251.0px;transform:scaleX(1.0101)">applications</span>
<span class="t" style="left:260.78px;top:90.0px;transform:scaleX(1.0328)">Volume</span>
<span class="t" style="left:465.00px;top:90.0px;transform:scaleX(1.0019)">Disposition</span>
<span class="t" style="left:535.61px;top:90.0px;transform:scaleX(0.9792)">Type</span>
<span class="t" style="left:588.84px;top:90.0px;transform:scaleX(0.9322)">Système </span>
<span class="t" style="left:635.83px;top:90.0px;transform:scaleX(0.9549)">de </span>
<span class="t" style="left:651.18px;top:90.0px;transform:scaleX(1.0269)">fichiers</span>
<span class="t" style="left:702.04px;top:90.0px;transform:scaleX(0.9382)">État</span>
<span class="t" style="left:1102.81px;top:90.0px;transform:scaleX(0.9835)">Capacité</span>
<span class="t" style="left:1166.09px;top:90.0px;transform:scaleX(0.8577)">Espace </span>
<span class="t" style="left:1203.45px;top:90.0px;transform:scaleX(1.0896)">libre</span>
<span class="t" style="left:1240.41px;top:90.0px;transform:scaleX(0.9808)">% libre</span>
<span class="t" style="left:464.90px;top:108.0px;transform:scaleX(1.0006)">Simple</span>
<span class="t" style="left:535.94px;top:108.0px;transform:scaleX(0.9265)">De base</span>
<span class="t" style="left:278.26px;top:108.0px;transform:scaleX(0.8937)">(F:)</span>
<span class="t" style="left:588.93px;top:108.0px;transform:scaleX(0.9487)">RAW</span>
<span class="t" style="left:701.86px;top:108.0px;transform:scaleX(0.8940)">Sain </span>
<span class="t" style="left:727.10px;top:108.0px;transform:scaleX(0.9932)">(Partition </span>
<span class="t" style="left:778.79px;top:108.0px;transform:scaleX(1.0174)">principale)</span>
<span class="t" style="left:1102.74px;top:108.0px;transform:scaleX(0.9286)">119,08 Go</span>
<span class="t" style="left:1165.74px;top:108.0px;transform:scaleX(0.9267)">119,08 Go</span>
<span class="t" style="left:1239.74px;top:108.0px;transform:scaleX(0.9322)">100 %</span>
<span class="t" style="left:464.90px;top:125.0px;transform:scaleX(1.0006)">Simple</span>
<span class="t" style="left:535.94px;top:125.0px;transform:scaleX(0.9265)">De base</span>
<span class="t" style="left:275.02px;top:125.0px;transform:scaleX(0.9589)">(Disque </span>
<span class="t" style="left:317.73px;top:125.0px;transform:scaleX(0.9500)">0 </span>
<span class="t" style="left:326.97px;top:125.0px;transform:scaleX(1.0508)">partition </span>
<span class="t" style="left:375.17px;top:125.0px;transform:scaleX(0.8870)">3)</span>
<span class="t" style="left:701.86px;top:125.0px;transform:scaleX(0.8940)">Sain </span>
<span class="t" style="left:727.10px;top:125.0px;transform:scaleX(0.9932)">(Partition </span>
<span class="t" style="left:778.83px;top:125.0px;transform:scaleX(0.9549)">de </span>
<span class="t" style="left:795.20px;top:125.0px;transform:scaleX(0.9970)">récupération)</span>
<span class="t" style="left:1102.71px;top:125.0px;transform:scaleX(0.9839)">609 Mo</span>
<span class="t" style="left:1165.71px;top:125.0px;transform:scaleX(0.9813)">609 Mo</span>
<span class="t" style="left:1239.74px;top:125.0px;transform:scaleX(0.9322)">100 %</span>
<span class="t" style="left:464.90px;top:142.0px;transform:scaleX(1.0006)">Simple</span>
<span class="t" style="left:535.94px;top:142.0px;transform:scaleX(0.9265)">De base</span>
<span class="t" style="left:275.02px;top:142.0px;transform:scaleX(0.9642)">CCCOMA_ </span>
<span class="t" style="left:332.18px;top:142.0px;transform:scaleX(0.8598)">X64FRE_ </span>
<span class="t" style="left:376.17px;top:142.0px;transform:scaleX(0.8757)">FR-CA_ </span>
<span class="t" style="left:414.07px;top:142.0px;transform:scaleX(0.8806)">DV9 </span>
<span class="t" style="left:438.50px;top:142.0px;transform:scaleX(0.8274)">(E:)</span>
<span class="t" style="left:588.94px;top:142.0px;transform:scaleX(0.9377)">UDF</span>
<span class="t" style="left:701.86px;top:142.0px;transform:scaleX(0.8940)">Sain </span>
<span class="t" style="left:727.10px;top:142.0px;transform:scaleX(0.9932)">(Partition </span>
<span class="t" style="left:778.79px;top:142.0px;transform:scaleX(1.0174)">principale)</span>
<span class="t" style="left:1102.75px;top:142.0px;transform:scaleX(0.9205)">5,19 Go</span>
<span class="t" style="left:1165.69px;top:142.0px;transform:scaleX(1.0205)">0 Mo</span>
<span class="t" style="left:1239.72px;top:142.0px;transform:scaleX(0.9601)">0 %</span>
<span class="t" style="left:464.90px;top:159.0px;transform:scaleX(1.0006)">Simple</span>
<span class="t" style="left:535.94px;top:159.0px;transform:scaleX(0.9265)">De base</span>
<span class="t" style="left:275.05px;top:159.0px;transform:scaleX(0.9153)">Réservé </span>
<span class="t" style="left:318.67px;top:159.0px;transform:scaleX(0.8808)">au </span>
<span class="t" style="left:333.82px;top:159.0px;transform:scaleX(0.9660)">système</span>
<span class="t" style="left:588.94px;top:159.0px;transform:scaleX(0.9293)">NTFS</span>
<span class="t" style="left:701.86px;top:159.0px;transform:scaleX(0.8940)">Sain </span>
<span class="t" style="left:727.14px;top:159.0px;transform:scaleX(0.9373)">(Système, </span>
<span class="t" style="left:780.79px;top:159.0px;transform:scaleX(1.0129)">Actif, </span>
<span class="t" style="left:811.80px;top:159.0px;transform:scaleX(0.9995)">Partition </span>
<span class="t" style="left:859.79px;top:159.0px;transform:scaleX(1.0118)">principale)</span>
<span class="t" style="left:1102.71px;top:159.0px;transform:scaleX(0.9839)">549 Mo</span>
<span class="t" style="left:1165.71px;top:159.0px;transform:scaleX(0.9813)">514 Mo</span>
<span class="t" style="left:1239.74px;top:159.0px;transform:scaleX(0.9330)">94 %</span>
<span class="t" style="left:464.90px;top:176.0px;transform:scaleX(1.0006)">Simple</span>
<span class="t" style="left:535.94px;top:176.0px;transform:scaleX(0.9265)">De base</span>
<span class="t" style="left:274.99px;top:176.0px;transform:scaleX(1.0089)">Windows </span>
<span class="t" style="left:327.66px;top:176.0px;transform:scaleX(0.8940)">(C:)</span>
<span class="t" style="left:588.94px;top:176.0px;transform:scaleX(0.9293)">NTFS</span>
<span class="t" style="left:701.86px;top:176.0px;transform:scaleX(0.8940)">Sain </span>
<span class="t" style="left:727.23px;top:176.0px;transform:scaleX(0.9476)">(Démarrer, </span>
<span class="t" style="left:785.83px;top:176.0px;transform:scaleX(0.9510)">Fichier </span>
<span class="t" style="left:823.62px;top:176.0px;transform:scaleX(0.9632)">d’échange, </span>
<span class="t" style="left:884.30px;top:176.0px;transform:scaleX(0.9961)">Purge </span>
<span class="t" style="left:918.72px;top:176.0px;transform:scaleX(0.9696)">sur </span>
<span class="t" style="left:937.99px;top:176.0px;transform:scaleX(1.0093)">incident, </span>
<span class="t" style="left:986.59px;top:176.0px;transform:scaleX(1.0135)">Partition </span>
<span class="t" style="left:1035.10px;top:176.0px;transform:scaleX(1.0081)">principale)</span>
<span class="t" style="left:1102.75px;top:176.0px;transform:scaleX(0.9135)">464,63 Go</span>
<span class="t" style="left:1165.75px;top:176.0px;transform:scaleX(0.9117)">405,57 Go</span>
<span class="t" style="left:1239.74px;top:176.0px;transform:scaleX(0.9330)">87 %</span>
<span class="t" style="left:1293.83px;top:91.0px;font-weight:700;transform:scaleX(0.9485)">Actions</span>
<span class="t" style="left:1295.93px;top:115.0px;transform:scaleX(0.9513)">Gestion </span>
<span class="t" style="left:1339.05px;top:115.0px;transform:scaleX(0.9202)">des </span>
<span class="t" style="left:1360.02px;top:115.0px;transform:scaleX(0.9736)">disques</span>
<span class="t" style="left:1319.80px;top:139.0px;transform:scaleX(0.9942)">Autres actions</span>
<span class="t" style="left:281.92px;top:408.0px;font-weight:700;transform:scaleX(0.9628)">Disque 0</span>
<span class="t" style="left:263.94px;top:423.0px;transform:scaleX(0.9357)">De base</span>
<span class="t" style="left:263.96px;top:438.0px;transform:scaleX(0.9080)">465,76 Go</span>
<span class="t" style="left:263.91px;top:453.0px;transform:scaleX(0.9913)">En ligne</span>
<span class="t" style="left:281.93px;top:507.0px;font-weight:700;transform:scaleX(0.9526)">Disque 1</span>
<span class="t" style="left:263.87px;top:522.0px;transform:scaleX(1.0446)">Amovible</span>
<span class="t" style="left:263.95px;top:537.0px;transform:scaleX(0.9249)">119,08 Go</span>
<span class="t" style="left:263.91px;top:552.0px;transform:scaleX(0.9913)">En ligne</span>
<span class="t" style="left:281.90px;top:606.0px;font-weight:700;transform:scaleX(1.0029)">CD-ROM 0</span>
<span class="t" style="left:263.95px;top:621.0px;transform:scaleX(0.9228)">DVD (D:)</span>
<span class="t" style="left:263.88px;top:651.0px;transform:scaleX(1.0278)">Aucun support</span>
<span class="t" style="left:281.91px;top:705.0px;font-weight:700;transform:scaleX(0.9908)">CD-ROM 1</span>
<span class="t" style="left:263.95px;top:720.0px;transform:scaleX(0.9156)">DVD</span>
<span class="t" style="left:263.95px;top:735.0px;transform:scaleX(0.9205)">5,19 Go</span>
<span class="t" style="left:263.91px;top:750.0px;transform:scaleX(0.9819)">En ligne</span>
<span class="t" style="left:367.03px;top:425.0px;font-weight:700;transform:scaleX(0.9428)">Réservé </span>
<span class="t" style="left:415.41px;top:425.0px;font-weight:700;transform:scaleX(0.9763)">au </span>
<span class="t" style="left:432.93px;top:425.0px;font-weight:700;transform:scaleX(0.9459)">système</span>
<span class="t" style="left:367.08px;top:440.0px;transform:scaleX(0.8607)">549 </span>
<span class="t" style="left:387.83px;top:440.0px;transform:scaleX(1.1183)">Mo </span>
<span class="t" style="left:409.99px;top:440.0px;transform:scaleX(0.8430)">NTFS</span>
<span class="t" style="left:367.06px;top:455.0px;transform:scaleX(0.8940)">Sain </span>
<span class="t" style="left:392.34px;top:455.0px;transform:scaleX(0.9373)">(Système, </span>
<span class="t" style="left:445.99px;top:455.0px;transform:scaleX(1.0129)">Actif, </span>
<span class="t" style="left:477.00px;top:455.0px;transform:scaleX(0.9995)">Partition </span>
<span class="t" style="left:524.98px;top:455.0px;transform:scaleX(1.0347)">principal</span>
<span class="t" style="left:587.91px;top:425.0px;font-weight:700;transform:scaleX(0.9795)">Windows </span>
<span class="t" style="left:645.60px;top:425.0px;font-weight:700;transform:scaleX(0.8327)">(C:)</span>
<span class="t" style="left:587.96px;top:440.0px;transform:scaleX(0.8985)">464,63 </span>
<span class="t" style="left:624.56px;top:440.0px;transform:scaleX(0.8982)">Go </span>
<span class="t" style="left:643.09px;top:440.0px;transform:scaleX(0.8496)">NTFS</span>
<span class="t" style="left:587.96px;top:455.0px;transform:scaleX(0.8940)">Sain </span>
<span class="t" style="left:613.33px;top:455.0px;transform:scaleX(0.9476)">(Démarrer, </span>
<span class="t" style="left:671.93px;top:455.0px;transform:scaleX(0.9510)">Fichier </span>
<span class="t" style="left:709.72px;top:455.0px;transform:scaleX(0.9632)">d’échange, </span>
<span class="t" style="left:770.40px;top:455.0px;transform:scaleX(0.9961)">Purge </span>
<span class="t" style="left:804.82px;top:455.0px;transform:scaleX(0.9696)">sur </span>
<span class="t" style="left:824.09px;top:455.0px;transform:scaleX(1.0093)">incident, </span>
<span class="t" style="left:872.69px;top:455.0px;transform:scaleX(1.0135)">Partition </span>
<span class="t" style="left:921.20px;top:455.0px;transform:scaleX(1.0081)">principale)</span>
<span class="t" style="left:1045.61px;top:440.0px;transform:scaleX(0.9813)">609 Mo</span>
<span class="t" style="left:1045.66px;top:455.0px;transform:scaleX(0.8940)">Sain </span>
<span class="t" style="left:1070.90px;top:455.0px;transform:scaleX(0.9932)">(Partition </span>
<span class="t" style="left:1122.63px;top:455.0px;transform:scaleX(0.9549)">de </span>
<span class="t" style="left:1139.00px;top:455.0px;transform:scaleX(0.9970)">récupération)</span>
<span class="t" style="left:373.08px;top:524.0px;font-weight:700;transform:scaleX(0.8720)">(F:)</span>
<span class="t" style="left:366.95px;top:539.0px;transform:scaleX(0.9245)">119,08 </span>
<span class="t" style="left:403.05px;top:539.0px;transform:scaleX(0.9184)">Go </span>
<span class="t" style="left:421.24px;top:539.0px;transform:scaleX(0.9411)">RAW</span>
<span class="t" style="left:366.96px;top:554.0px;transform:scaleX(0.8940)">Sain </span>
<span class="t" style="left:392.20px;top:554.0px;transform:scaleX(0.9932)">(Partition </span>
<span class="t" style="left:443.89px;top:554.0px;transform:scaleX(1.0174)">principale)</span>
<span class="t" style="left:366.76px;top:722.0px;font-weight:700;transform:scaleX(0.8980)">CCCOMA_ </span>
<span class="t" style="left:420.84px;top:722.0px;font-weight:700;transform:scaleX(0.9306)">X64FRE_ </span>
<span class="t" style="left:468.77px;top:722.0px;font-weight:700;transform:scaleX(0.8856)">FR-CA_ </span>
<span class="t" style="left:507.71px;top:722.0px;font-weight:700;transform:scaleX(0.9845)">DV9 </span>
<span class="t" style="left:537.09px;top:722.0px;font-weight:700;transform:scaleX(0.8461)">(E:)</span>
<span class="t" style="left:366.75px;top:737.0px;transform:scaleX(0.9163)">5,19 </span>
<span class="t" style="left:391.37px;top:737.0px;transform:scaleX(0.8914)">Go </span>
<span class="t" style="left:409.37px;top:737.0px;transform:scaleX(0.8908)">UDF</span>
<span class="t" style="left:366.76px;top:752.0px;transform:scaleX(0.8940)">Sain </span>
<span class="t" style="left:392.00px;top:752.0px;transform:scaleX(0.9932)">(Partition </span>
<span class="t" style="left:443.69px;top:752.0px;transform:scaleX(1.0174)">principale)</span>
<span class="t" style="left:275.78px;top:798.0px;transform:scaleX(1.0254)">Non alloué</span>
<span class="t" style="left:355.29px;top:798.0px;transform:scaleX(1.0135)">Partition </span>
<span class="t" style="left:403.79px;top:798.0px;transform:scaleX(1.0087)">principale</span>
</body></html>
